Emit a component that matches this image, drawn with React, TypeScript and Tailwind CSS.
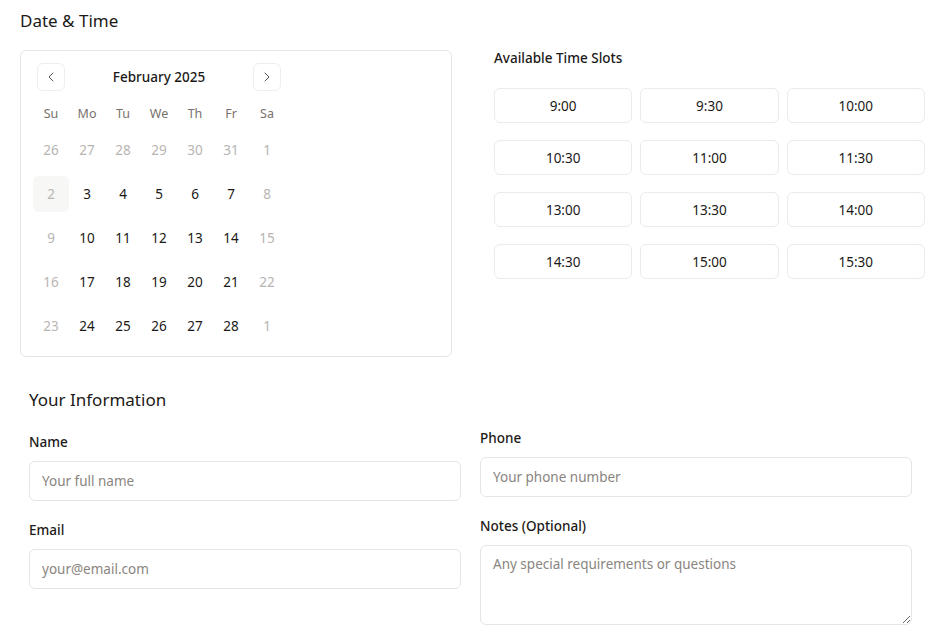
import { ChevronLeft, ChevronRight } from "lucide-react";

const weekdays = ["Su", "Mo", "Tu", "We", "Th", "Fr", "Sa"];

// each cell: [label, muted, today]
const weeks: [string, boolean, boolean][][] = [
  [["26", true, false], ["27", true, false], ["28", true, false], ["29", true, false], ["30", true, false], ["31", true, false], ["1", true, false]],
  [["2", true, true], ["3", false, false], ["4", false, false], ["5", false, false], ["6", false, false], ["7", false, false], ["8", true, false]],
  [["9", true, false], ["10", false, false], ["11", false, false], ["12", false, false], ["13", false, false], ["14", false, false], ["15", true, false]],
  [["16", true, false], ["17", false, false], ["18", false, false], ["19", false, false], ["20", false, false], ["21", false, false], ["22", true, false]],
  [["23", true, false], ["24", false, false], ["25", false, false], ["26", false, false], ["27", false, false], ["28", false, false], ["1", true, false]],
];

const slots = ["9:00", "9:30", "10:00", "10:30", "11:00", "11:30", "13:00", "13:30", "14:00", "14:30", "15:00", "15:30"];

export default function App() {
  return (
    <div className="min-h-screen w-[933px] bg-white text-[#1c1917] font-['Noto_Sans','Open_Sans',sans-serif]">
      <section className="pl-5 pt-[7px]">
        <h2 className="text-[17px] leading-7 font-normal">Date &amp; Time</h2>
        <div className="mt-[15px] flex gap-[42px]">
          <div className="w-[432px] shrink-0 rounded-md border border-[#e7e5e4] p-3">
            <div className="w-[252px]">
              <div className="flex h-7 items-center justify-between px-1">
                <button className="flex h-7 w-7 items-center justify-center rounded-md border border-[#efeeed] text-[#57534e]">
                  <ChevronLeft className="h-4 w-4" strokeWidth={1.5} />
                </button>
                <span className="text-[13.5px] font-medium">February 2025</span>
                <button className="flex h-7 w-7 items-center justify-center rounded-md border border-[#efeeed] text-[#57534e]">
                  <ChevronRight className="h-4 w-4" strokeWidth={1.5} />
                </button>
              </div>
              <div className="mt-[13px] flex">
                {weekdays.map((d) => (
                  <div key={d} className="w-9 text-center text-[12.5px] leading-5 text-[#78716c]">
                    {d}
                  </div>
                ))}
              </div>
              {weeks.map((week, wi) => (
                <div key={wi} className="mt-2 flex">
                  {week.map(([label, muted, today], di) => (
                    <div
                      key={di}
                      className={`flex h-9 w-9 items-center justify-center rounded-md text-[13.5px] ${
                        muted ? "text-[#b8b5b2]" : "text-[#1c1917]"
                      } ${today ? "bg-[#f7f7f6]" : ""}`}
                    >
                      {label}
                    </div>
                  ))}
                </div>
              ))}
            </div>
          </div>

          <div className="w-[431px] shrink-0">
            <p className="text-[13.5px] leading-4 font-medium">Available Time Slots</p>
            <div className="mt-[22px] grid grid-cols-3 gap-x-2 gap-y-[17px]">
              {slots.map((s) => (
                <button
                  key={s}
                  className="flex h-[35px] items-center justify-center rounded-md border border-[#ecebea] bg-white pt-px text-[13.5px]"
                >
                  {s}
                </button>
              ))}
            </div>
          </div>
        </div>
      </section>

      <section className="mt-[29px] grid grid-cols-[432px_432px] gap-x-[19px] pl-[29px]">
        <div>
          <h2 className="text-[17px] leading-7 font-normal">Your Information</h2>
          <label className="mt-[18px] block text-[13.5px] leading-5 font-medium">Name</label>
          <input
            placeholder="Your full name"
            className="mt-[9px] h-10 w-full rounded-md border border-[#e7e5e4] px-3 text-[13.5px] outline-none placeholder:text-[#8a8580]"
          />
          <label className="mt-[19px] block text-[13.5px] leading-5 font-medium">Email</label>
          <input
            placeholder="your@email.com"
            className="mt-[9px] h-10 w-full rounded-md border border-[#e7e5e4] px-3 text-[13.5px] outline-none placeholder:text-[#8a8580]"
          />
        </div>
        <div className="pt-[42px]">
          <label className="block text-[13.5px] leading-5 font-medium">Phone</label>
          <input
            placeholder="Your phone number"
            className="mt-[9px] h-10 w-full rounded-md border border-[#e7e5e4] px-3 text-[13.5px] outline-none placeholder:text-[#8a8580]"
          />
          <label className="mt-[19px] block text-[13.5px] leading-5 font-medium">Notes (Optional)</label>
          <textarea
            rows={3}
            placeholder="Any special requirements or questions"
            className="mt-[9px] block h-20 w-full rounded-md border border-[#e7e5e4] px-3 py-2 text-[13.5px] outline-none placeholder:text-[#8a8580]"
          />
        </div>
      </section>
    </div>
  );
}
